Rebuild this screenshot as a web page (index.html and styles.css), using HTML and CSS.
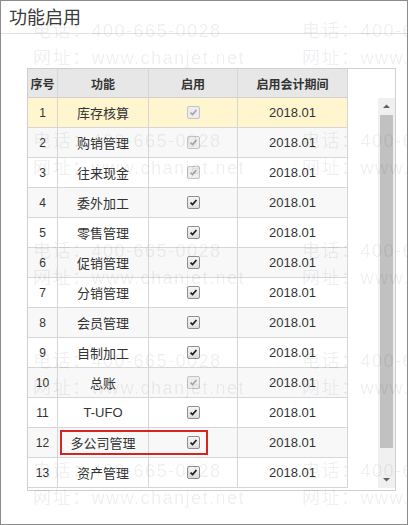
FILE: index.html
```html
<!DOCTYPE html>
<html lang="zh-CN">
<head>
<meta charset="utf-8">
<title>功能启用</title>
<link rel="stylesheet" href="styles.css">
</head>
<body>
<div class="window">
  <div class="title">功能启用</div>
  <div class="content">
    <div class="gridbox">
      <div class="table">
        <div class="row head">
          <div class="c c1">序号</div>
          <div class="c c2">功能</div>
          <div class="c c3">启用</div>
          <div class="c c4">启用会计期间</div>
        </div>
        <div class="row sel">
          <div class="c c1">1</div><div class="c c2">库存核算</div>
          <div class="c c3"><span class="cb dis"><svg viewBox="0 0 13 13"><path d="M3 6.6 L5.4 9 L10 3.6"/></svg></span></div>
          <div class="c c4">2018.01</div>
        </div>
        <div class="row even">
          <div class="c c1">2</div><div class="c c2">购销管理</div>
          <div class="c c3"><span class="cb dis"><svg viewBox="0 0 13 13"><path d="M3 6.6 L5.4 9 L10 3.6"/></svg></span></div>
          <div class="c c4">2018.01</div>
        </div>
        <div class="row">
          <div class="c c1">3</div><div class="c c2">往来现金</div>
          <div class="c c3"><span class="cb dis"><svg viewBox="0 0 13 13"><path d="M3 6.6 L5.4 9 L10 3.6"/></svg></span></div>
          <div class="c c4">2018.01</div>
        </div>
        <div class="row even">
          <div class="c c1">4</div><div class="c c2">委外加工</div>
          <div class="c c3"><span class="cb"><svg viewBox="0 0 13 13"><path d="M3 6.6 L5.4 9 L10 3.6"/></svg></span></div>
          <div class="c c4">2018.01</div>
        </div>
        <div class="row">
          <div class="c c1">5</div><div class="c c2">零售管理</div>
          <div class="c c3"><span class="cb"><svg viewBox="0 0 13 13"><path d="M3 6.6 L5.4 9 L10 3.6"/></svg></span></div>
          <div class="c c4">2018.01</div>
        </div>
        <div class="row even">
          <div class="c c1">6</div><div class="c c2">促销管理</div>
          <div class="c c3"><span class="cb"><svg viewBox="0 0 13 13"><path d="M3 6.6 L5.4 9 L10 3.6"/></svg></span></div>
          <div class="c c4">2018.01</div>
        </div>
        <div class="row">
          <div class="c c1">7</div><div class="c c2">分销管理</div>
          <div class="c c3"><span class="cb"><svg viewBox="0 0 13 13"><path d="M3 6.6 L5.4 9 L10 3.6"/></svg></span></div>
          <div class="c c4">2018.01</div>
        </div>
        <div class="row even">
          <div class="c c1">8</div><div class="c c2">会员管理</div>
          <div class="c c3"><span class="cb"><svg viewBox="0 0 13 13"><path d="M3 6.6 L5.4 9 L10 3.6"/></svg></span></div>
          <div class="c c4">2018.01</div>
        </div>
        <div class="row">
          <div class="c c1">9</div><div class="c c2">自制加工</div>
          <div class="c c3"><span class="cb"><svg viewBox="0 0 13 13"><path d="M3 6.6 L5.4 9 L10 3.6"/></svg></span></div>
          <div class="c c4">2018.01</div>
        </div>
        <div class="row even">
          <div class="c c1">10</div><div class="c c2">总账</div>
          <div class="c c3"><span class="cb dis"><svg viewBox="0 0 13 13"><path d="M3 6.6 L5.4 9 L10 3.6"/></svg></span></div>
          <div class="c c4">2018.01</div>
        </div>
        <div class="row">
          <div class="c c1">11</div><div class="c c2">T-UFO</div>
          <div class="c c3"><span class="cb"><svg viewBox="0 0 13 13"><path d="M3 6.6 L5.4 9 L10 3.6"/></svg></span></div>
          <div class="c c4">2018.01</div>
        </div>
        <div class="row even">
          <div class="c c1">12</div><div class="c c2">多公司管理</div>
          <div class="c c3"><span class="cb"><svg viewBox="0 0 13 13"><path d="M3 6.6 L5.4 9 L10 3.6"/></svg></span></div>
          <div class="c c4">2018.01</div>
        </div>
        <div class="row">
          <div class="c c1">13</div><div class="c c2">资产管理</div>
          <div class="c c3"><span class="cb"><svg viewBox="0 0 13 13"><path d="M3 6.6 L5.4 9 L10 3.6"/></svg></span></div>
          <div class="c c4">2018.01</div>
        </div>
      </div>
      <div class="scrollbar">
        <div class="sb-btn"><svg viewBox="0 0 17 17"><path d="M5 10 L8.5 6.5 L12 10 Z"/></svg></div>
        <div class="sb-thumb"></div>
        <div class="sb-track"></div>
        <div class="sb-btn"><svg viewBox="0 0 17 17"><path d="M5 7 L8.5 10.5 L12 7 Z"/></svg></div>
      </div>
    </div>
  </div>
  <div class="highlight"></div>
  <div class="watermark">
    <div class="wm"><span>电话：400-665-0028</span><span>网址：www.chanjet.net</span></div>
    <div class="wm"><span>电话：400-665-0028</span><span>网址：www.chanjet.net</span></div>
    <div class="wm"><span>电话：400-665-0028</span><span>网址：www.chanjet.net</span></div>
    <div class="wm"><span>电话：400-665-0028</span><span>网址：www.chanjet.net</span></div>
    <div class="wm"><span>电话：400-665-0028</span><span>网址：www.chanjet.net</span></div>
    <div class="wm"><span>电话：400-665-0028</span><span>网址：www.chanjet.net</span></div>
    <div class="wm"><span>电话：400-665-0028</span><span>网址：www.chanjet.net</span></div>
    <div class="wm"><span>电话：400-665-0028</span><span>网址：www.chanjet.net</span></div>
    <div class="wm"><span>电话：400-665-0028</span><span>网址：www.chanjet.net</span></div>
    <div class="wm"><span>电话：400-665-0028</span><span>网址：www.chanjet.net</span></div>
  </div>
</div>
</body>
</html>
```

FILE: styles.css
```css
html, body {
  margin: 0;
  padding: 0;
  background: #fff;
}

body {
  font-family: "Liberation Sans", "Noto Sans CJK SC", sans-serif;
  color: #333;
}

.window {
  position: relative;
  width: 408px;
  height: 525px;
  box-sizing: border-box;
  border: 1px solid #8c8c8c;
  background: #fff;
  overflow: hidden;
}

.title {
  height: 32px;
  line-height: 31px;
  padding-left: 8px;
  font-family: "Noto Sans CJK SC", sans-serif;
  font-size: 18px;
  color: #3a3a3a;
  border-bottom: 1px solid #e2e2e2;
}

.content {
  padding: 34px 0 0 26px;
}

.gridbox {
  display: flex;
  width: 369px;
  height: 423px;
  box-sizing: border-box;
  border: 1px solid #cfcfcf;
}

.table {
  width: 320px;
  flex: none;
}

.row {
  display: grid;
  grid-template-columns: 30px 91px 89px 110px;
  height: 30px;
  background: #fff;
}

.row.even {
  background: #f8f8f8;
}

.row.sel {
  background: #fff6d0;
}

.row.head {
  height: 29px;
  background: #e7e7e7;
}

.c {
  display: flex;
  align-items: center;
  justify-content: center;
  box-sizing: border-box;
  border-right: 1px solid #d6d6d6;
  border-bottom: 1px solid #d6d6d6;
  font-size: 13px;
  white-space: nowrap;
}

.c1 {
  font-size: 12px;
}

.head .c {
  font-family: "Noto Sans CJK SC", sans-serif;
  font-size: 12px;
  font-weight: bold;
  color: #333;
  border-bottom-color: #d0d0d0;
}

.c2 {
  font-family: "Noto Sans CJK SC", "Liberation Sans", sans-serif;
}

.c2:lang(zh-CN) {
  font-family: "Liberation Sans", "Noto Sans CJK SC", sans-serif;
}

.cb {
  width: 13px;
  height: 13px;
  box-sizing: border-box;
  border: 1px solid #8e8e8e;
  border-radius: 2px;
  background: linear-gradient(#f6f6f6, #dcdcdc);
  display: block;
}

.cb svg {
  display: block;
  width: 11px;
  height: 11px;
}

.cb path {
  fill: none;
  stroke: #1e1e1e;
  stroke-width: 2;
}

.cb.dis {
  border-color: #c4c4c4;
  background: #ededed;
}

.cb.dis path {
  stroke: #a5a5a5;
}

.scrollbar {
  margin-left: 30px;
  margin-top: 29px;
  width: 17px;
  height: 390px;
  display: flex;
  flex-direction: column;
  background: #f0f0f0;
}

.sb-btn {
  height: 17px;
  flex: none;
}

.sb-btn svg {
  display: block;
  width: 17px;
  height: 17px;
}

.sb-btn path {
  fill: #606060;
}

.sb-thumb {
  margin: 0 2px;
  height: 333px;
  flex: none;
  background: #c1c1c1;
}

.sb-track {
  flex: 1;
}

.highlight {
  position: absolute;
  left: 59px;
  top: 429px;
  width: 148px;
  height: 25px;
  box-sizing: border-box;
  border: 2px solid #d42424;
  pointer-events: none;
}

.watermark {
  position: absolute;
  inset: 0;
  padding: 17px 0 0 32px;
  display: grid;
  grid-template-columns: 269px 269px;
  grid-auto-rows: 110px;
  pointer-events: none;
  font-family: "Liberation Sans", "Noto Sans CJK SC", sans-serif;
  font-size: 18px;
  letter-spacing: 1.5px;
  line-height: 27px;
  color: rgba(0, 0, 0, 0.075);
  white-space: nowrap;
}

.wm {
  display: flex;
  flex-direction: column;
}
```
